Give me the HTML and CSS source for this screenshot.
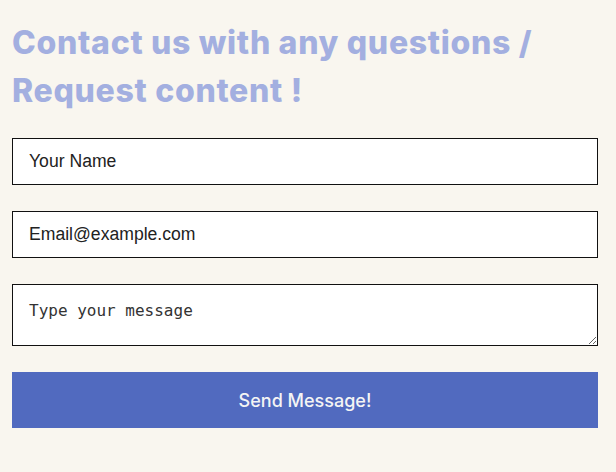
FILE: index.html
```html
<!DOCTYPE html>
<html>
<head>
<meta charset="utf-8">
<link rel="stylesheet" href="styles.css">
</head>
<body>
<main class="page">
  <h1 class="title">Contact us with any questions / Request content !</h1>
  <form class="form">
    <input class="field" type="text" placeholder="Your Name">
    <input class="field" type="email" placeholder="Email@example.com">
    <textarea class="message" placeholder="Type your message"></textarea>
    <button class="send" type="button">Send Message!</button>
  </form>
</main>
</body>
</html>
```
FILE: styles.css
```css
html, body {
  margin: 0;
  padding: 0;
  background: #f9f6ef;
}
.page {
  width: 586px;
  padding: 19px 18px 0 12px;
}
.title {
  margin: 0 0 23px;
  font-family: Inter, "Open Sans", sans-serif;
  font-weight: 800;
  font-size: 32px;
  line-height: 48px;
  color: #a3afe0;
  letter-spacing: 0.7px;
}
.form {
  display: flex;
  flex-direction: column;
  gap: 26px;
}
.field {
  box-sizing: border-box;
  width: 586px;
  height: 47px;
  margin: 0;
  padding: 0 16px;
  border: 1px solid #111;
  background: #fff;
  font-family: "Liberation Sans", Arial, sans-serif;
  font-size: 17.6px;
  color: #222;
  outline: none;
}
.field::placeholder {
  color: #222;
  opacity: 1;
}
.message {
  box-sizing: border-box;
  width: 586px;
  height: 62px;
  margin: 0;
  padding: 16px 16px;
  border: 1px solid #111;
  background: #fff;
  font-family: "DejaVu Sans Mono", monospace;
  font-size: 16px;
  color: #222;
  outline: none;
}
.message::placeholder {
  color: #333;
  opacity: 1;
}
.send {
  width: 586px;
  height: 56px;
  margin: 0;
  border: none;
  background: #516abf;
  color: #f4f4f4;
  font-family: Inter, "Open Sans", sans-serif;
  font-size: 18px;
  font-weight: 500;
  cursor: pointer;
}
```
